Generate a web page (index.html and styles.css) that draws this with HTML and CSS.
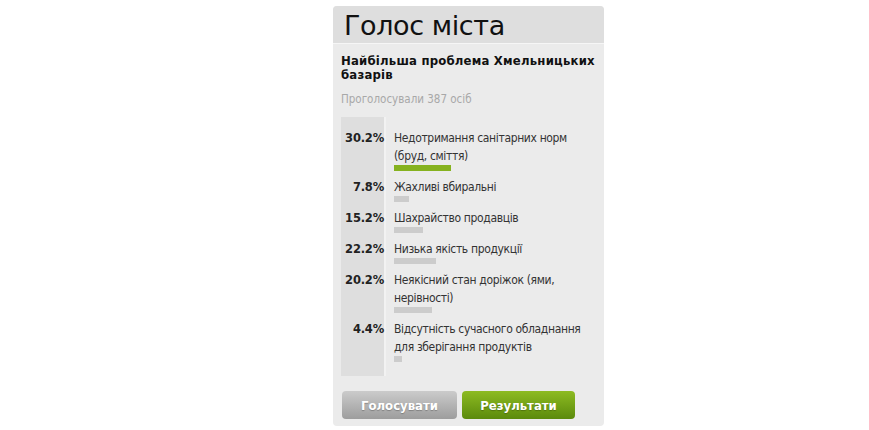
FILE: index.html
```html
<!DOCTYPE html>
<html lang="uk">
<head>
    <meta charset="UTF-8">
    <title>Голос міста</title>
    <link rel="stylesheet" href="styles.css">
</head>
<body>

    <div class="poll">
        <h1 class="poll-title">Голос міста</h1>
        <div class="poll-body">
            <h2 class="poll-question">Найбільша проблема Хмельницьких базарів</h2>
            <div class="poll-total">Проголосували 387 осіб</div>

            <div class="poll-results">
                <div class="result">
                    <div class="result-pct">30.2%</div>
                    <div class="result-info">
                        <div class="result-label">Недотримання санітарних норм (бруд, сміття)</div>
                        <div class="result-bar top" style="width: 57px"></div>
                    </div>
                </div>
                <div class="result">
                    <div class="result-pct">7.8%</div>
                    <div class="result-info">
                        <div class="result-label">Жахливі вбиральні</div>
                        <div class="result-bar" style="width: 15px"></div>
                    </div>
                </div>
                <div class="result">
                    <div class="result-pct">15.2%</div>
                    <div class="result-info">
                        <div class="result-label">Шахрайство продавців</div>
                        <div class="result-bar" style="width: 29px"></div>
                    </div>
                </div>
                <div class="result">
                    <div class="result-pct">22.2%</div>
                    <div class="result-info">
                        <div class="result-label">Низька якість продукції</div>
                        <div class="result-bar" style="width: 42px"></div>
                    </div>
                </div>
                <div class="result">
                    <div class="result-pct">20.2%</div>
                    <div class="result-info">
                        <div class="result-label">Неякісний стан доріжок (ями, нерівності)</div>
                        <div class="result-bar" style="width: 38px"></div>
                    </div>
                </div>
                <div class="result">
                    <div class="result-pct">4.4%</div>
                    <div class="result-info">
                        <div class="result-label">Відсутність сучасного обладнання для зберігання продуктів</div>
                        <div class="result-bar" style="width: 8px"></div>
                    </div>
                </div>
            </div>

            <div class="poll-buttons">
                <button class="poll-button vote">Голосувати</button>
                <button class="poll-button results">Результати</button>
            </div>
        </div>
    </div>

</body>
</html>
```

FILE: styles.css
```css
body {
    margin: 0;
    background: #ffffff;
    font-family: 'DejaVu Sans Condensed', 'DejaVu Sans', sans-serif;
    color: #222;
}
.poll {
    width: 271px;
    margin: 6px 0 0 333px;
    background: #ebebeb;
    border-radius: 4px;
    overflow: hidden;
}
.poll-title {
    margin: 0;
    height: 37px;
    padding: 0 0 0 11px;
    background: #dedede;
    border-bottom: 1px solid #f6f6f6;
    font-family: 'DejaVu Sans', sans-serif;
    font-weight: normal;
    font-size: 27px;
    line-height: 39px;
    color: #111;
    letter-spacing: -0.4px;
}
.poll-body {
    padding: 10px 8px 7px 8px;
}
.poll-question {
    margin: 0;
    font-size: 13px;
    font-weight: bold;
    line-height: 14px;
    color: #111;
    letter-spacing: 0.2px;
}
.poll-total {
    margin-top: 10px;
    font-size: 11.5px;
    line-height: 14px;
    color: #a8a8a8;
}
.poll-results {
    margin-top: 11px;
    position: relative;
    padding: 12px 0 14px 0;
}
/* grey column behind the percentages */
.poll-results::before {
    content: '';
    position: absolute;
    left: 0;
    top: 0;
    bottom: 0;
    width: 43px;
    background: #dedede;
    border-right: 2px solid #f2f2f2;
}
.result {
    position: relative;
    display: flex;
    margin-bottom: 7px;
}
.result:last-child {
    margin-bottom: 0;
}
.result-pct {
    width: 43px;
    flex: none;
    text-align: right;
    font-family: 'DejaVu Sans', sans-serif;
    font-size: 11.5px;
    font-weight: bold;
    line-height: 18px;
    color: #222;
    letter-spacing: -0.2px;
}
.result-info {
    padding-left: 10px;
    flex: 1;
}
.result-label {
    font-size: 12px;
    line-height: 18px;
    color: #333;
    letter-spacing: -0.35px;
}
.result-bar {
    height: 6px;
    background: #cccccc;
}
.result-bar.top {
    background: #86b21f;
}
.poll-buttons {
    display: flex;
    gap: 5px;
    margin-top: 15px;
    padding-left: 1px;
}
.poll-button {
    height: 28px;
    border: none;
    border-radius: 4px;
    font-family: 'DejaVu Sans Condensed', 'DejaVu Sans', sans-serif;
    font-size: 13px;
    font-weight: bold;
    color: #ffffff;
    text-shadow: 0 1px 1px rgba(0, 0, 0, 0.25);
    cursor: pointer;
}
.poll-button.vote {
    width: 115px;
    background: linear-gradient(#cbcbcb, #9d9d9d);
}
.poll-button.results {
    width: 113px;
    background: linear-gradient(#8dbb22, #5b8a0c);
}
```
